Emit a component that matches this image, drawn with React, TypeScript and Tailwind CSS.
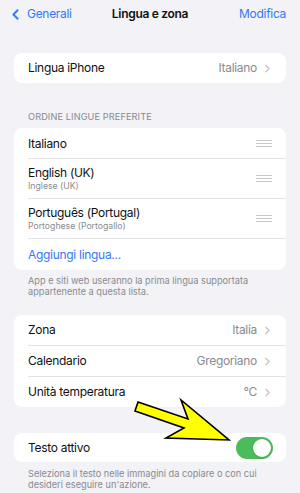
import { ChevronLeft, ChevronRight } from 'lucide-react';

function Chevron() {
  return <ChevronRight className="h-[13px] w-[13px] text-[#c4c4c7]" strokeWidth={2.4} />;
}

function Grip() {
  return (
    <div className="flex w-[16px] flex-col gap-[2px]">
      <div className="h-px bg-[#c7c7cc]" />
      <div className="h-px bg-[#c7c7cc]" />
      <div className="h-px bg-[#c7c7cc]" />
    </div>
  );
}

function Divider() {
  return <div className="ml-[14px] h-px bg-[#e3e3e6]" />;
}

function ValueRow({ label, value }: { label: string; value: string }) {
  return (
    <div className="flex h-[30px] items-center justify-between pl-[14px] pr-[12px]">
      <span className="text-[#111]">{label}</span>
      <span className="flex items-center gap-[4px] text-[#8a8a8e]">
        {value}
        <Chevron />
      </span>
    </div>
  );
}

function LangRow({ title, sub }: { title: string; sub?: string }) {
  return (
    <div className={`flex items-center justify-between pl-[14px] pr-[14px] ${sub ? 'h-[39px]' : 'h-[30px]'}`}>
      <div className="flex flex-col">
        <span className="leading-[15px] text-[#111]">{title}</span>
        {sub && <span className="text-[8.7px] leading-[12px] tracking-normal text-[#8a8a8e]">{sub}</span>}
      </div>
      <Grip />
    </div>
  );
}

export default function App() {
  return (
    <div
      className="relative h-[493px] w-[300px] overflow-hidden bg-[#f2f2f7] text-[12px] tracking-[-0.3px]"
      style={{ fontFamily: 'Inter, "Noto Sans", sans-serif' }}
    >
      {/* Navigation */}
      <div className="relative flex h-[28px] items-center justify-between pl-[7px] pr-[14px]">
        <div className="flex items-center gap-[3px] text-[#3478f6]">
          <ChevronLeft className="h-[17px] w-[17px]" strokeWidth={2.6} />
          <span>Generali</span>
        </div>
        <span className="absolute left-1/2 -translate-x-1/2 font-semibold text-[#111]">Lingua e zona</span>
        <span className="text-[#3478f6]">Modifica</span>
      </div>

      {/* Lingua iPhone */}
      <div className="mx-[14px] mt-[25px] rounded-[8px] bg-white">
        <ValueRow label="Lingua iPhone" value="Italiano" />
      </div>

      {/* Ordine lingue */}
      <div className="mt-[28px] px-[28px] text-[9.2px] leading-[12px] tracking-[0.1px] text-[#8a8a8e]">
        ORDINE LINGUE PREFERITE
      </div>
      <div className="mx-[14px] mt-[5px] rounded-[8px] bg-white">
        <LangRow title="Italiano" />
        <Divider />
        <LangRow title="English (UK)" sub="Inglese (UK)" />
        <Divider />
        <LangRow title="Português (Portugal)" sub="Portoghese (Portogallo)" />
        <Divider />
        <div className="flex h-[31px] items-center pl-[14px] text-[#3478f6]">Aggiungi lingua...</div>
      </div>
      <p className="mt-[6px] px-[28px] text-[9.2px] leading-[10.5px] tracking-normal text-[#8a8a8e]">
        App e siti web useranno la prima lingua supportata appartenente a questa lista.
      </p>

      {/* Zona */}
      <div className="mx-[14px] mt-[18px] rounded-[8px] bg-white">
        <ValueRow label="Zona" value="Italia" />
        <Divider />
        <ValueRow label="Calendario" value="Gregoriano" />
        <Divider />
        <ValueRow label="Unità temperatura" value="°C" />
      </div>

      {/* Testo attivo */}
      <div className="mx-[14px] mt-[26px] flex h-[29px] items-center justify-between rounded-[8px] bg-white pl-[14px] pr-[13px]">
        <span className="text-[#111]">Testo attivo</span>
        <div className="flex h-[22px] w-[37px] items-center justify-end rounded-full bg-[#4cbb5a] pr-[2px]">
          <div className="h-[18px] w-[18px] rounded-full bg-white shadow-sm" />
        </div>
      </div>
      <p className="mt-[7px] px-[28px] text-[9.2px] leading-[10.5px] tracking-normal text-[#8a8a8e]">
        Seleziona il testo nelle immagini da copiare o con cui desideri eseguire un'azione.
      </p>

      {/* Annotation arrow */}
      <svg className="pointer-events-none absolute left-0 top-0" width="300" height="493" viewBox="0 0 300 493">
        <polygon
          points="138,402 188,419 181,400 229,440 166,438 184,428 135,411"
          fill="#ffff00"
          stroke="#000"
          strokeWidth="1.6"
          strokeLinejoin="miter"
        />
      </svg>
    </div>
  );
}
